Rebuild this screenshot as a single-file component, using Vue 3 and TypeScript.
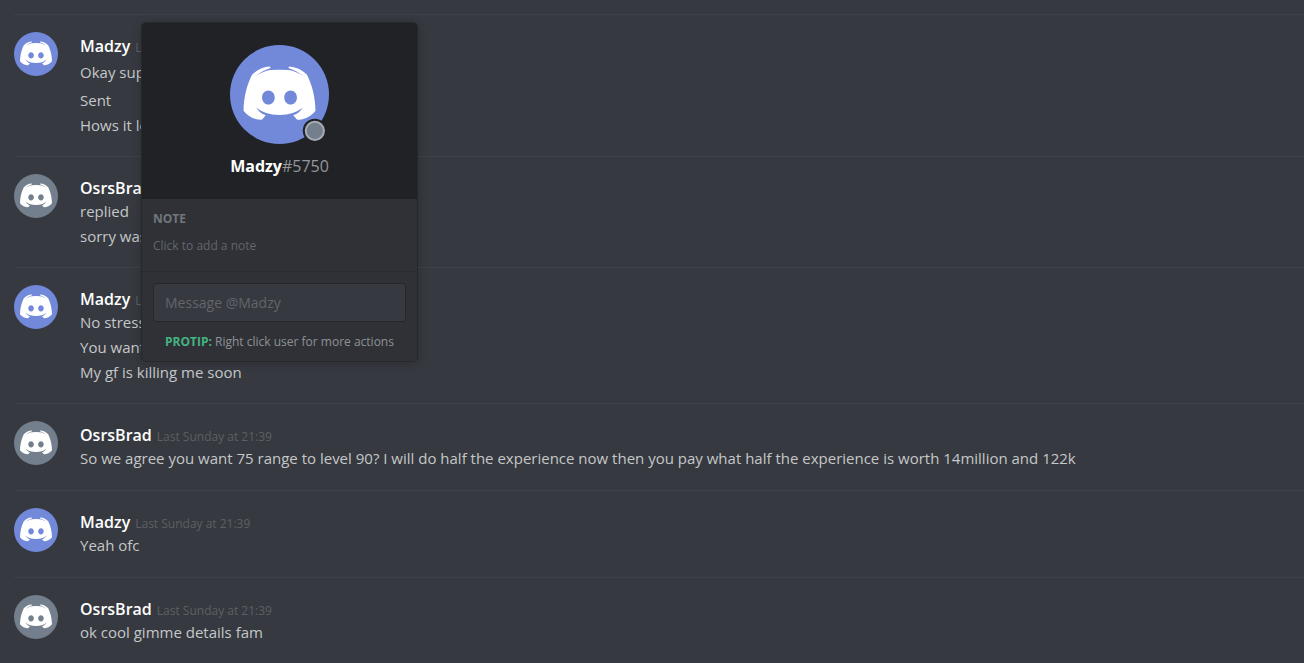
<script setup lang="ts">
import { ref } from 'vue'

interface Message {
  text: string
  tall?: boolean
}

interface Group {
  author: string
  tone: 'blurple' | 'grey'
  time: string
  messages: Message[]
}

const facePath =
  'M13.4 65C13.6 51 17 39 21.8 29.5C27 24.5 33 21.8 39.5 21.4L40.3 22.8C34.5 24.8 30.5 27 25 30.6C30 28 35 25.4 40 24.8Q49 24 58 24.8C63 25.4 68 28 73 30.6C67.5 27 63.5 24.8 57.7 22.8L58.5 21.4C65 21.8 71 24.5 76.2 29.5C81 39 84.4 51 84.6 65C80 71 73.5 74 66.5 74L62.6 69.6C67 68 70 65.5 72 61.8C66 66.5 59 69.2 49 69.2C39 69.2 32 66.5 26 61.8C28 65.5 31 68 35.4 69.6L31.5 74C24.5 74 18 71 13.4 65Z' +
  'M38 45C34.5 45 31.7 48.1 31.7 52C31.7 55.9 34.5 59 38 59C41.5 59 44.3 55.9 44.3 52C44.3 48.1 41.5 45 38 45Z' +
  'M60 45C56.5 45 53.7 48.1 53.7 52C53.7 55.9 56.5 59 60 59C63.5 59 66.3 55.9 66.3 52C66.3 48.1 63.5 45 60 45Z'

const time = 'Last Sunday at 21:39'

const groups: Group[] = [
  {
    author: 'Madzy',
    tone: 'blurple',
    time,
    messages: [{ text: 'Okay sup', tall: true }, { text: 'Sent' }, { text: 'Hows it lo' }],
  },
  { author: 'OsrsBrad', tone: 'grey', time, messages: [{ text: 'replied' }, { text: 'sorry was' }] },
  {
    author: 'Madzy',
    tone: 'blurple',
    time,
    messages: [{ text: 'No stress' }, { text: 'You want' }, { text: 'My gf is killing me soon' }],
  },
  {
    author: 'OsrsBrad',
    tone: 'grey',
    time,
    messages: [
      {
        text: 'So we agree you want 75 range to level 90? I will do half the experience now then you pay what half the experience is worth 14million and 122k',
      },
    ],
  },
  { author: 'Madzy', tone: 'blurple', time, messages: [{ text: 'Yeah ofc' }] },
  { author: 'OsrsBrad', tone: 'grey', time, messages: [{ text: 'ok cool gimme details fam' }] },
]

const note = ref('')
const draft = ref('')
</script>

<template>
  <main class="chat">
    <article v-for="(group, g) in groups" :key="g" class="group">
      <svg class="avatar" :class="group.tone" viewBox="0 0 98 98" aria-hidden="true">
        <circle cx="49" cy="49" r="49" />
        <path :d="facePath" fill="#fff" fill-rule="evenodd" />
      </svg>
      <div class="body">
        <header class="head">
          <strong class="author">{{ group.author }}</strong>
          <time class="time">{{ group.time }}</time>
        </header>
        <p v-for="(message, m) in group.messages" :key="m" class="message" :class="{ tall: message.tall }">
          {{ message.text }}
        </p>
      </div>
    </article>

    <aside class="popout" aria-label="User profile">
      <div class="profile">
        <svg class="portrait blurple" viewBox="0 0 98 98" aria-hidden="true">
          <circle cx="49" cy="49" r="49" />
          <path :d="facePath" fill="#fff" fill-rule="evenodd" />
          <circle class="cutout" cx="84" cy="85" r="12" />
          <circle class="status" cx="84" cy="85" r="9" />
        </svg>
        <div class="tag"><strong>Madzy</strong><span class="number">#5750</span></div>
      </div>
      <div class="note">
        <label class="label" for="note">NOTE</label>
        <textarea id="note" v-model="note" class="note-text" rows="2" placeholder="Click to add a note"></textarea>
      </div>
      <div class="footer">
        <input v-model="draft" class="dm" type="text" placeholder="Message @Madzy" aria-label="Message @Madzy" />
        <p class="protip"><strong>PROTIP:</strong> Right click user for more actions</p>
      </div>
    </aside>
  </main>
</template>

<style>
body {
  background: #36393f;
}
</style>

<style scoped>
.chat {
  position: relative;
  box-sizing: border-box;
  height: 100vh;
  overflow: hidden;
  padding: 14px 0 0 14px;
  background: #36393f;
  color: #c5c7c9;
  font-family: 'Open Sans', 'Noto Sans', sans-serif;
}

.group {
  display: flex;
  gap: 22px;
  box-sizing: border-box;
  min-height: 87px;
  padding: 17px 0 18px;
  border-top: 1px solid #3e4147;
}

.avatar {
  flex: none;
  width: 44px;
  height: 44px;
}

.blurple {
  fill: #7289da;
}

.grey {
  fill: #747f8d;
}

.body {
  flex: 1;
  min-width: 0;
  padding-top: 4px;
}

.head {
  display: flex;
  align-items: baseline;
  gap: 5px;
  height: 21px;
  line-height: 21px;
}

.author {
  color: #fff;
  font-size: 16px;
  font-weight: 600;
}

.time {
  color: #5d6066;
  font-size: 12px;
}

.message {
  margin: 0;
  font-size: 15px;
  line-height: 25px;
}

.message.tall {
  line-height: 31px;
}

.popout {
  position: absolute;
  top: 22px;
  left: 141px;
  box-sizing: border-box;
  width: 277px;
  overflow: hidden;
  border: 1px solid #26282c;
  border-radius: 5px;
  background: #2f3136;
  box-shadow: 0 2px 10px rgba(0, 0, 0, 0.2);
}

.profile {
  display: flex;
  flex-direction: column;
  align-items: center;
  gap: 9px;
  padding: 22px 0 20px;
  background: #202225;
}

.portrait {
  width: 99px;
  height: 99px;
  overflow: visible;
}

.cutout {
  fill: #202225;
}

.status {
  fill: #747f8d;
  stroke: #a5abb3;
  stroke-width: 2;
}

.tag {
  color: #fff;
  font-size: 16px;
  line-height: 26px;
}

.number {
  color: #96989b;
}

.note {
  padding: 12px 11px 10px;
  border-bottom: 1px solid #292b2f;
}

.label {
  display: block;
  color: #72767d;
  font-size: 12px;
  font-weight: 700;
  line-height: 16px;
}

.note-text {
  display: block;
  box-sizing: border-box;
  width: 100%;
  height: 24px;
  margin-top: 10px;
  padding: 0;
  border: 0;
  outline: 0;
  resize: none;
  overflow: hidden;
  background: transparent;
  color: #b9bbbe;
  font: inherit;
  font-size: 12px;
  line-height: 18px;
}

.footer {
  padding: 11px 11px 10px;
}

.dm {
  display: block;
  box-sizing: border-box;
  width: 100%;
  height: 39px;
  padding: 0 11px;
  border: 1px solid #25272b;
  border-radius: 3px;
  outline: 0;
  background: #36393f;
  color: #dcddde;
  font: inherit;
  font-size: 14px;
}

.note-text::placeholder,
.dm::placeholder {
  color: #62656a;
  opacity: 1;
}

.protip {
  margin: 11px 0 0;
  color: #8e9196;
  font-size: 12px;
  line-height: 18px;
  text-align: center;
  white-space: nowrap;
}

.protip strong {
  color: #43b581;
}
</style>
